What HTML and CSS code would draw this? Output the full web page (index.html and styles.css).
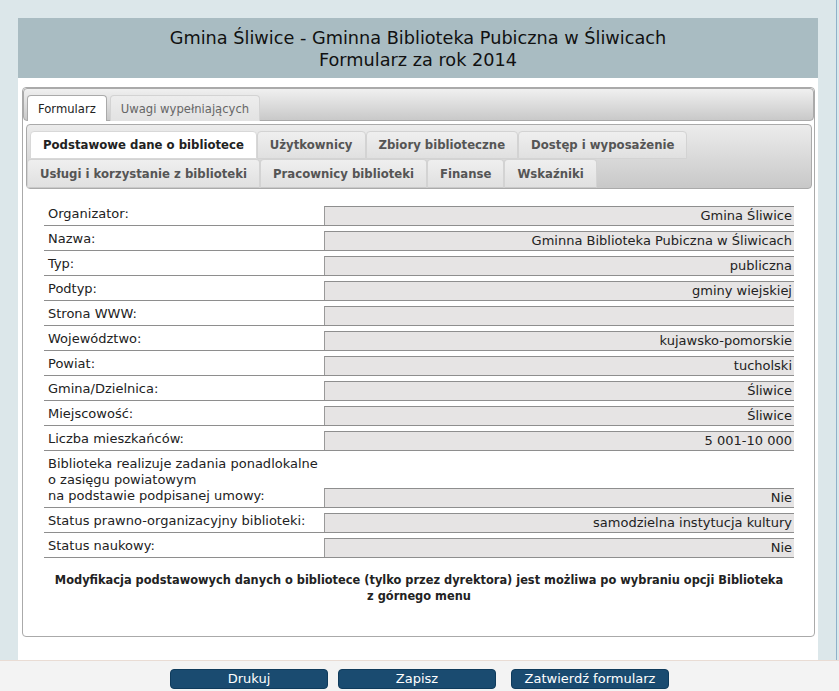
FILE: index.html
```html
<!DOCTYPE html>
<html lang="pl">
<head>
<meta charset="utf-8">
<title>Formularz</title>
<link rel="stylesheet" href="styles.css">
</head>
<body>
<div class="frame">
  <div class="page">
    <div class="header">Gmina Śliwice - Gminna Biblioteka Pubiczna w Śliwicach<br>Formularz za rok 2014</div>
    <div class="content">
      <div class="outer">
        <div class="outer-nav">
          <span class="otab active">Formularz</span>
          <span class="otab">Uwagi wypełniających</span>
        </div>
        <div class="inner">
          <div class="inner-nav">
            <div class="irow row1">
              <span class="itab active">Podstawowe dane o bibliotece</span>
              <span class="itab">Użytkownicy</span>
              <span class="itab">Zbiory biblioteczne</span>
              <span class="itab">Dostęp i wyposażenie</span>
            </div>
            <div class="irow row2">
              <span class="itab">Usługi i korzystanie z biblioteki</span>
              <span class="itab">Pracownicy biblioteki</span>
              <span class="itab">Finanse</span>
              <span class="itab">Wskaźniki</span>
            </div>
          </div>
          <div class="panel">
            <div class="rows">
              <div class="row"><div class="lbl">Organizator:</div><div class="val">Gmina Śliwice</div></div>
              <div class="row"><div class="lbl">Nazwa:</div><div class="val">Gminna Biblioteka Pubiczna w Śliwicach</div></div>
              <div class="row"><div class="lbl">Typ:</div><div class="val">publiczna</div></div>
              <div class="row"><div class="lbl">Podtyp:</div><div class="val">gminy wiejskiej</div></div>
              <div class="row"><div class="lbl">Strona WWW:</div><div class="val"></div></div>
              <div class="row"><div class="lbl">Województwo:</div><div class="val">kujawsko-pomorskie</div></div>
              <div class="row"><div class="lbl">Powiat:</div><div class="val">tucholski</div></div>
              <div class="row"><div class="lbl">Gmina/Dzielnica:</div><div class="val">Śliwice</div></div>
              <div class="row"><div class="lbl">Miejscowość:</div><div class="val">Śliwice</div></div>
              <div class="row"><div class="lbl">Liczba mieszkańców:</div><div class="val">5 001-10 000</div></div>
              <div class="row"><div class="lbl">Biblioteka realizuje zadania ponadlokalne<br>o zasięgu powiatowym<br>na podstawie podpisanej umowy:</div><div class="val">Nie</div></div>
              <div class="row"><div class="lbl">Status prawno-organizacyjny biblioteki:</div><div class="val">samodzielna instytucja kultury</div></div>
              <div class="row"><div class="lbl">Status naukowy:</div><div class="val">Nie</div></div>
            </div>
            <p class="note">Modyfikacja podstawowych danych o bibliotece (tylko przez dyrektora) jest możliwa po wybraniu opcji Biblioteka z górnego menu</p>
          </div>
        </div>
      </div>
    </div>
  </div>
</div>
<div class="bottombar">
  <button class="btn">Drukuj</button>
  <button class="btn">Zapisz</button>
  <button class="btn btn-wide-gap">Zatwierdź formularz</button>
</div>
</body>
</html>
```
FILE: styles.css
```css
html, body {
  margin: 0;
  padding: 0;
}
body {
  background: #dce7ea;
  font-family: "DejaVu Sans", Verdana, sans-serif;
  color: #222;
  overflow: hidden;
}
.frame {
  width: 837px;
  box-sizing: border-box;
  border-right: 1px solid #8fb1c9;
  min-height: 700px;
}
.page {
  width: 800px;
  margin-left: 18px;
  padding-top: 18px;
}
.header {
  height: 60px;
  box-sizing: border-box;
  padding-top: 9px;
  background: #a9bcc2;
  text-align: center;
  font-size: 17.7px;
  line-height: 22px;
  color: #111;
}
.content {
  background: #fff;
  padding: 9px 3px 30px 4px;
  min-height: 600px;
}
.outer {
  border: 1px solid #aaa;
  border-radius: 4px;
  padding: 0 0 32px 0;
}
.outer-nav {
  display: flex;
  align-items: flex-end;
  height: 33px;
  box-sizing: border-box;
  padding: 0 3px;
  border: 1px solid #aaa;
  border-radius: 4px;
  background: linear-gradient(#f0f0f0, #c9c9c9);
}
.otab {
  height: 26px;
  box-sizing: border-box;
  padding: 0 10px;
  margin-right: 3px;
  margin-bottom: -1px;
  display: flex;
  align-items: center;
  font-size: 11.6px;
  color: #666;
  background: linear-gradient(#ededed, #e2e2e2);
  border: 1px solid #d3d3d3;
  border-bottom: none;
  border-radius: 4px 4px 0 0;
}
.otab.active {
  background: #fff;
  color: #222;
  border-color: #aaa;
}
.inner {
  margin: 3px 2px 0 3px;
}
.inner-nav {
  border: 1px solid #aaa;
  border-radius: 4px;
  background: linear-gradient(#ececec, #c8c8c8);
  padding: 6px 0 0 0;
  height: 65px;
  box-sizing: border-box;
}
.irow {
  display: flex;
}
.row1 {
  padding-left: 3px;
}
.row2 {
  padding-left: 0;
}
.itab {
  height: 28px;
  box-sizing: border-box;
  padding: 0 12px;
  display: flex;
  align-items: center;
  font-size: 11.7px;
  font-weight: bold;
  color: #555;
  background: linear-gradient(#efefef, #e0e0e0);
  border: 1px solid #d3d3d3;
  border-radius: 4px 4px 0 0;
}
.row2 .itab {
  height: 29px;
  border-bottom-color: #c9c9c9;
}
.itab.active {
  background: #fff;
  color: #222;
  border-color: #d8d8d8;
}
.panel {
  padding: 12px 18px 0 18px;
}
.rows {
  display: flex;
  flex-direction: column;
}
.row {
  display: grid;
  grid-template-columns: 280px 1fr;
  align-items: end;
  border-bottom: 1px solid #8e8e8e;
}
.lbl {
  font-size: 13px;
  line-height: 16px;
  padding: 5px 0 3px 4px;
  color: #222;
}
.val {
  height: 19px;
  box-sizing: border-box;
  background: #e6e4e4;
  border-top: 1px solid #8e8e8e;
  border-left: 1px solid #9a9a9a;
  text-align: right;
  font-size: 13px;
  line-height: 18px;
  padding-right: 2px;
  white-space: nowrap;
}
.note {
  margin: 14px 0 0 0;
  padding: 0 8px;
  font-size: 11.4px;
  line-height: 16px;
  font-weight: bold;
  text-align: center;
  color: #222;
}
.bottombar {
  position: fixed;
  left: 0;
  right: 0;
  bottom: 0;
  height: 31px;
  box-sizing: border-box;
  border-top: 1px solid #e9dcd4;
  background: #f3f3f3;
  display: flex;
  justify-content: center;
  padding-top: 8px;
  gap: 10px;
}
.btn {
  width: 158px;
  height: 20px;
  padding: 0;
  border: 1px solid #0f3b5c;
  border-radius: 4px;
  background: #1a4b70;
  color: #fff;
  font-family: "DejaVu Sans", Verdana, sans-serif;
  font-size: 13px;
  line-height: 18px;
}
.btn-wide-gap {
  margin-left: 5px;
}
```
